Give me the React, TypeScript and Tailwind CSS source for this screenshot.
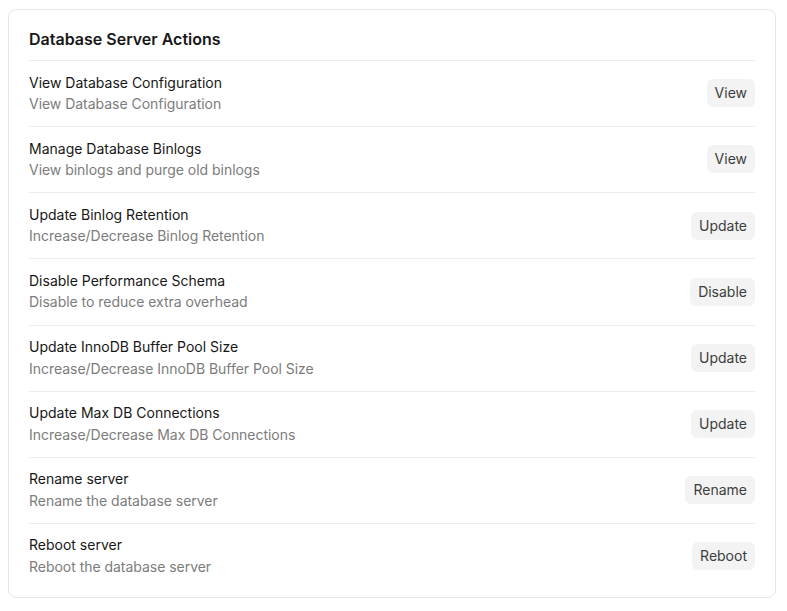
const actions = [
  { title: "View Database Configuration", desc: "View Database Configuration", label: "View" },
  { title: "Manage Database Binlogs", desc: "View binlogs and purge old binlogs", label: "View" },
  { title: "Update Binlog Retention", desc: "Increase/Decrease Binlog Retention", label: "Update" },
  { title: "Disable Performance Schema", desc: "Disable to reduce extra overhead", label: "Disable" },
  { title: "Update InnoDB Buffer Pool Size", desc: "Increase/Decrease InnoDB Buffer Pool Size", label: "Update" },
  { title: "Update Max DB Connections", desc: "Increase/Decrease Max DB Connections", label: "Update" },
  { title: "Rename server", desc: "Rename the database server", label: "Rename" },
  { title: "Reboot server", desc: "Reboot the database server", label: "Reboot" },
];

export default function App() {
  return (
    <div className="min-h-screen bg-white pl-2 pr-[11px] pt-[9px] font-['Inter',sans-serif] antialiased">
      <div className="rounded-lg border border-[#e6e6e6] bg-white px-5 pb-2 pt-[17px]">
        <h2 className="text-base font-semibold leading-6 text-[#171717]">Database Server Actions</h2>
        <div className="mt-[9px]">
          {actions.map((a) => (
            <div
              key={a.title}
              className="flex items-center justify-between border-t border-[#ededed] pb-[12.15px] pt-[11.5px]"
            >
              <div className="flex flex-col">
                <div className="text-sm leading-5 text-[#171717]">{a.title}</div>
                <div className="mt-[1.5px] text-sm leading-5 tracking-[-0.03px] text-[#7c7c7c]">{a.desc}</div>
              </div>
              <button className="h-7 rounded-md bg-[#f3f3f3] px-2 text-sm text-[#3d3d3d]">
                {a.label}
              </button>
            </div>
          ))}
        </div>
      </div>
    </div>
  );
}
